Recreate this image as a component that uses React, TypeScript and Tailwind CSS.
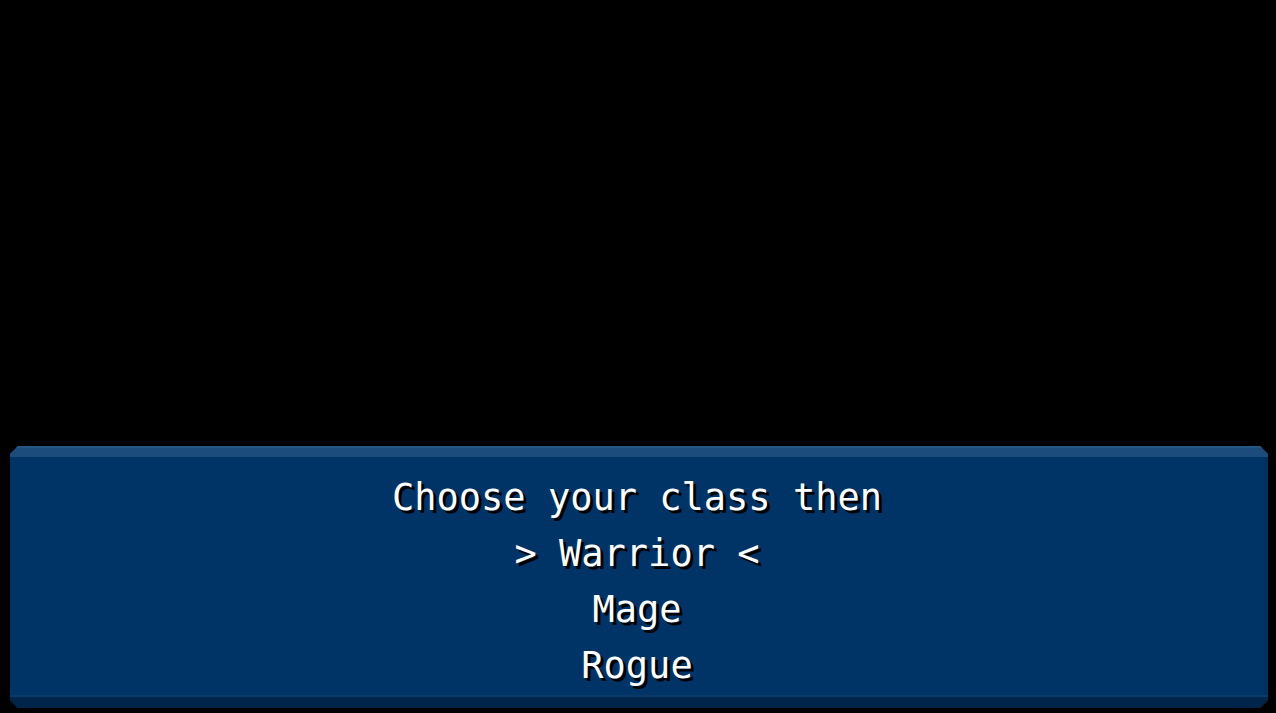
export default function App() {
  const lines = ["Choose your class then", "> Warrior <", "Mage", "Rogue"];
  return (
    <div className="w-[1276px] h-[713px] bg-black flex flex-col justify-end overflow-hidden">
      <div className="ml-[10px] mr-[8px] mb-[5px] h-[262px] bg-[#003366] flex flex-col [clip-path:polygon(8px_0,calc(100%-8px)_0,100%_8px,100%_calc(100%-8px),calc(100%-8px)_100%,8px_100%,0_calc(100%-8px),0_8px)]">
        <div className="h-[11px] bg-[#1b4c7c] border-t-[2px] border-[#235684]" />
        <div className="flex-1 flex flex-col items-center pt-[13px] border-r-[4px] border-[#00305f]">
          {lines.map((t) => (
            <div
              key={t}
              className="h-[56px] leading-[56px] text-white text-[37px] whitespace-pre font-['DejaVu_Sans_Mono',monospace] [text-shadow:3px_3px_0_#000]"
            >
              {t}
            </div>
          ))}
        </div>
        <div className="h-[13px] bg-[#00244a] border-t-[2px] border-[#0a3a6a]" />
      </div>
    </div>
  );
}
